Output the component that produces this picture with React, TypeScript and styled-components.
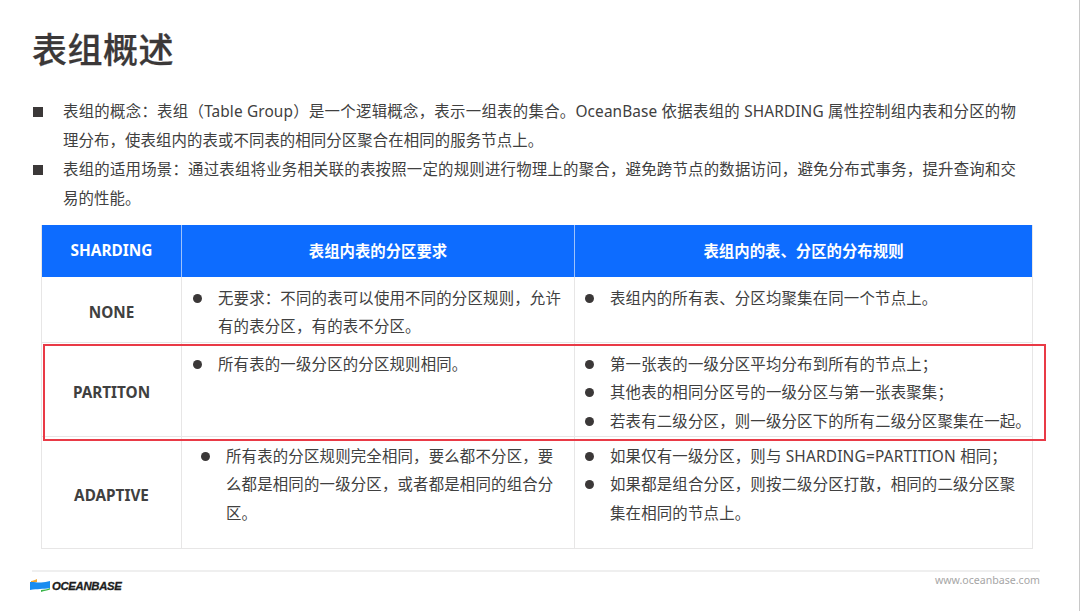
import React from "react";
import styled, { createGlobalStyle } from "styled-components";

const GlobalStyle = createGlobalStyle`
  html, body {
    margin: 0;
    padding: 0;
    background: #fff;
  }
  body {
    font-family: "Noto Sans", "Noto Sans CJK SC", sans-serif;
    color: #404040;
  }
`;

interface RowData {
  name: string;
  height: number;
  top: number;
  indent?: number;
  left: string[];
  right: string[];
}

const rows: RowData[] = [
  {
    name: "NONE",
    height: 65,
    top: 8,
    left: ["无要求：不同的表可以使用不同的分区规则，允许有的表分区，有的表不分区。"],
    right: ["表组内的所有表、分区均聚集在同一个节点上。"],
  },
  {
    name: "PARTITON",
    height: 94,
    top: 8,
    left: ["所有表的一级分区的分区规则相同。"],
    right: [
      "第一张表的一级分区平均分布到所有的节点上；",
      "其他表的相同分区号的一级分区与第一张表聚集；",
      "若表有二级分区，则一级分区下的所有二级分区聚集在一起。",
    ],
  },
  {
    name: "ADAPTIVE",
    height: 112,
    top: 6,
    indent: 8,
    left: ["所有表的分区规则完全相同，要么都不分区，要么都是相同的一级分区，或者都是相同的组合分区。"],
    right: [
      "如果仅有一级分区，则与 SHARDING=PARTITION 相同；",
      "如果都是组合分区，则按二级分区打散，相同的二级分区聚\n集在相同的节点上。",
    ],
  },
];

const CellList: React.FC<{ items: string[]; top: number; indent?: number; last?: boolean }> = ({
  items,
  top,
  indent,
  last,
}) => (
  <Cell $top={top} $indent={indent} $last={last}>
    {items.map((text) => (
      <CellItem key={text}>
        <Dot />
        <span>{text}</span>
      </CellItem>
    ))}
  </Cell>
);

const App: React.FC = () => {
  return (
    <Slide>
      <GlobalStyle />
      <Title>表组概述</Title>
      <Intro>
        <IntroItem>
          <Square />
          <IntroText>
            表组的概念：表组（Table Group）是一个逻辑概念，表示一组表的集合。OceanBase 依据表组的 SHARDING 属性控制组内表和分区的物理分布，使表组内的表或不同表的相同分区聚合在相同的服务节点上。
          </IntroText>
        </IntroItem>
        <IntroItem>
          <Square />
          <IntroText>
            表组的适用场景：通过表组将业务相关联的表按照一定的规则进行物理上的聚合，避免跨节点的数据访问，避免分布式事务，提升查询和交易的性能。
          </IntroText>
        </IntroItem>
      </Intro>
      <TableWrap>
        <HeadRow>
          <HeadCell>SHARDING</HeadCell>
          <HeadCell>表组内表的分区要求</HeadCell>
          <HeadCell>表组内的表、分区的分布规则</HeadCell>
        </HeadRow>
        {rows.map((row) => (
          <BodyRow key={row.name} $height={row.height}>
            <NameCell>{row.name}</NameCell>
            <CellList items={row.left} top={row.top} indent={row.indent} />
            <CellList items={row.right} top={row.top} last />
          </BodyRow>
        ))}
        <Highlight />
      </TableWrap>
      <Footer>
        <Brand>
          <svg width="20" height="13" viewBox="0 0 20 13">
            <path d="M1 2 C3 1.5 5 1.2 7 0 L7 3 L1 4Z" fill="#f2a52e" />
            <path d="M0 3 C4 2.5 7 4 11 3.5 C14 3 17 3 20 2 L20 9 C16 10 13 9.5 10 10 C7 10.5 4 10 0 11Z" fill="#1a8cf0" />
            <path d="M11 11 C14 10.5 17 10.5 20 9 L20 10.5 C17 12 14 11.5 11 13Z" fill="#3cb54a" />
          </svg>
          <BrandName>OCEANBASE</BrandName>
        </Brand>
        <Site>www.oceanbase.com</Site>
      </Footer>
    </Slide>
  );
};

const Slide = styled.div`
  width: 1080px;
  height: 611px;
  box-sizing: border-box;
  padding: 25px 0 0 32px;
  border-right: 1px solid #c8c8c8;
  overflow: hidden;
  background: #fff;
`;

const Title = styled.h1`
  margin: 0;
  font-size: 35px;
  line-height: 50px;
  font-weight: 500;
  color: #3b3838;
  letter-spacing: 0.5px;
  -webkit-text-stroke: 0.25px #3b3838;
`;

const Intro = styled.div`
  margin-top: 22px;
  width: 985px;
`;

const IntroItem = styled.div`
  display: flex;
  align-items: flex-start;
`;

const Square = styled.i`
  flex: none;
  width: 10px;
  height: 10px;
  margin: 10px 20px 0 1px;
  background: #3b3838;
`;

const IntroText = styled.div`
  width: 953px;
  font-size: 15.4px;
  line-height: 29px;
  letter-spacing: 0.1px;
  text-align: justify;
`;

const TableWrap = styled.div`
  position: relative;
  width: 992px;
  margin: 12px 0 0 9px;
  border-left: 1px solid #e7e6e6;
  border-right: 1px solid #e7e6e6;
  border-bottom: 1px solid #e7e6e6;
  box-sizing: border-box;
`;

const HeadRow = styled.div`
  display: grid;
  grid-template-columns: 139px 393px 1fr;
  height: 52px;
  background: #0d6cff;
`;

const HeadCell = styled.div`
  display: flex;
  align-items: center;
  justify-content: center;
  padding-bottom: 2px;
  color: #fff;
  font-size: 15.4px;
  font-weight: 700;
  & + & {
    border-left: 1px solid #9dc2fb;
  }
`;

const BodyRow = styled.div<{ $height: number }>`
  display: grid;
  grid-template-columns: 139px 393px 1fr;
  height: ${(p) => p.$height}px;
  box-sizing: border-box;
  & + & {
    border-top: 1px solid #e7e6e6;
  }
`;

const NameCell = styled.div`
  display: flex;
  align-items: center;
  justify-content: center;
  padding-top: 5px;
  font-size: 15.3px;
  font-weight: 700;
  color: #404040;
`;

const Cell = styled.div<{ $top: number; $indent?: number; $last?: boolean }>`
  box-sizing: border-box;
  border-left: 1px solid #e7e6e6;
  padding-top: ${(p) => p.$top}px;
  padding-right: ${(p) => (p.$last ? 0 : 10)}px;
  padding-left: ${(p) => (p.$last ? 9 : 10) + (p.$indent || 0)}px;
  font-size: 15.4px;
  line-height: 28.3px;
  letter-spacing: 0.2px;
  white-space: pre-line;
`;

const CellItem = styled.div`
  display: flex;
  align-items: flex-start;
`;

const Dot = styled.i`
  flex: none;
  width: 9px;
  height: 9px;
  margin: 9px 16px 0 1px;
  border-radius: 50%;
  background: #3b3838;
`;

const Highlight = styled.div`
  position: absolute;
  left: 1px;
  top: 119px;
  width: 1003px;
  height: 97px;
  box-sizing: border-box;
  border: 2px solid #e93a46;
  pointer-events: none;
`;

const Footer = styled.div`
  display: flex;
  align-items: flex-start;
  justify-content: space-between;
  width: 1008px;
  margin: 21px 0 0 0;
  padding-top: 4px;
  border-top: 2px solid #efefef;
`;

const Brand = styled.div`
  display: flex;
  align-items: center;
  gap: 2px;
  margin: 3px 0 0 -2px;
`;

const BrandName = styled.span`
  font-family: "Liberation Sans", sans-serif;
  font-size: 11.3px;
  font-weight: 700;
  font-style: italic;
  color: #1d1d1d;
  letter-spacing: -0.3px;
  -webkit-text-stroke: 0.3px #1d1d1d;
`;

const Site = styled.span`
  margin-top: -3px;
  font-size: 10.6px;
  line-height: 14px;
  color: #a6a6a6;
`;

export default App;
